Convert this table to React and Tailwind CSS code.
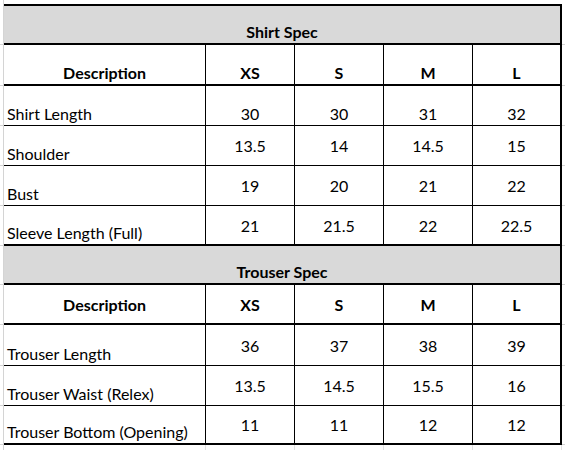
import React from "react";

const shirt = [
  { label: "Shirt Length", vals: ["30", "30", "31", "32"], h: "h-[40px]", b: "border-b", end: true },
  { label: "Shoulder", vals: ["13.5", "14", "14.5", "15"], h: "h-[40px]", b: "border-b" },
  { label: "Bust", vals: ["19", "20", "21", "22"], h: "h-[40px]", b: "border-b" },
  { label: "Sleeve Length (Full)", vals: ["21", "21.5", "22", "22.5"], h: "h-[40px]", b: "border-b-2" },
];

const trouser = [
  { label: "Trouser Length", vals: ["36", "37", "38", "39"], h: "h-[41px]", b: "border-b" },
  { label: "Trouser Waist (Relex)", vals: ["13.5", "14.5", "15.5", "16"], h: "h-[40px]", b: "border-b" },
  { label: "Trouser Bottom (Opening)", vals: ["11", "11", "12", "12"], h: "h-[39px]", b: "border-b-2" },
];

function LeftGutter() {
  return <div className="w-[4px] shrink-0 border-r border-b border-[#d4d4d4]" />;
}
function RightGutter() {
  return <div className="flex-1 border-b border-[#d4d4d4]" />;
}

function TitleRow({ title, h, top }) {
  return (
    <div className={`flex ${h}`}>
      <LeftGutter />
      <div
        className={`w-[558px] shrink-0 bg-[#d9d9d9] border-black border-r-2 border-b-2 ${top ? "border-t-2" : ""} flex items-end justify-center pb-[2px]`}
      >
        <span className="font-bold leading-[19px]">{title}</span>
      </div>
      <RightGutter />
    </div>
  );
}

function HeaderRow({ h, align }) {
  const cols = ["XS", "S", "M", "L"];
  const pad = align === "items-end" ? "pb-[2px]" : "";
  return (
    <div className={`flex ${h}`}>
      <LeftGutter />
      <div className={`w-[202px] shrink-0 border-r border-b-2 border-black flex ${align} justify-center ${pad}`}>
        <span className="font-bold leading-[19px]">Description</span>
      </div>
      {cols.map((c, i) => (
        <div
          key={c}
          className={`w-[89px] shrink-0 border-b-2 border-black flex ${align} justify-center ${pad} ${i === 3 ? "border-r-2" : "border-r"}`}
        >
          <span className="font-bold leading-[19px]">{c}</span>
        </div>
      ))}
      <RightGutter />
    </div>
  );
}

function DataRow({ row }) {
  return (
    <div className={`flex ${row.h}`}>
      <LeftGutter />
      <div className={`w-[202px] shrink-0 border-r ${row.b} border-black flex items-end pl-[3px] pb-[2px]`}>
        <span className="leading-[19px] whitespace-nowrap">{row.label}</span>
      </div>
      {row.vals.map((v, i) => (
        <div
          key={i}
          className={`w-[89px] shrink-0 ${row.b} border-black flex justify-center ${row.end ? "items-end pb-[2px]" : "items-center"} ${i === 3 ? "border-r-2" : "border-r"}`}
        >
          <span className="leading-[19px]">{v}</span>
        </div>
      ))}
      <RightGutter />
    </div>
  );
}

export default function App() {
  return (
    <div
      className="w-[565px] h-[450px] bg-white text-black text-[16px] overflow-hidden flex flex-col"
      style={{ fontFamily: "Lato, 'Open Sans', sans-serif" }}
    >
      <div className="flex h-[4px]">
        <div className="w-[4px] shrink-0 border-r border-[#d4d4d4]" />
        <div className="flex-1" />
      </div>
      <TitleRow title="Shirt Spec" h="h-[41px]" top />
      <HeaderRow h="h-[41px]" align="items-end" />
      {shirt.map((r) => (
        <DataRow key={r.label} row={r} />
      ))}
      <TitleRow title="Trouser Spec" h="h-[39px]" />
      <HeaderRow h="h-[40px]" align="items-center" />
      {trouser.map((r) => (
        <DataRow key={r.label} row={r} />
      ))}
      <div className="flex flex-1">
        <div className="w-[4px] shrink-0 border-r border-[#d4d4d4]" />
        <div className="w-[202px] shrink-0 border-r border-[#e1e1e1]" />
        <div className="w-[89px] shrink-0 border-r border-[#e1e1e1]" />
        <div className="w-[89px] shrink-0 border-r border-[#e1e1e1]" />
        <div className="w-[89px] shrink-0 border-r border-[#e1e1e1]" />
        <div className="w-[89px] shrink-0 border-r border-[#e1e1e1]" />
        <div className="flex-1" />
      </div>
    </div>
  );
}
